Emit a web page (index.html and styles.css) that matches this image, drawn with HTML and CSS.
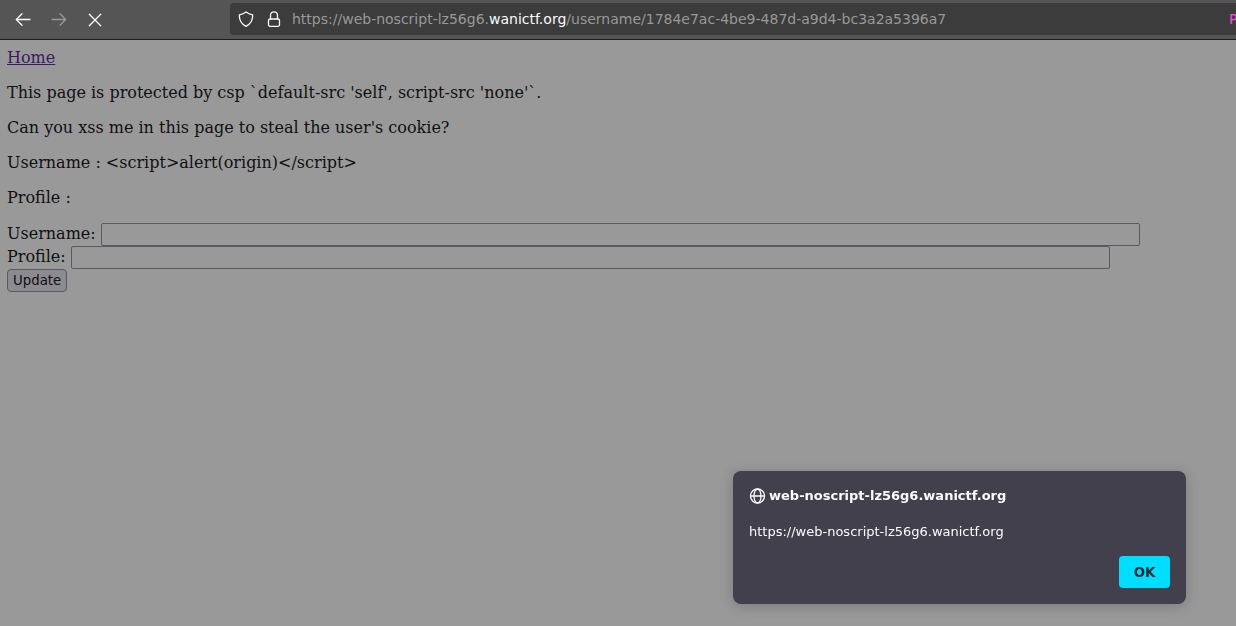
FILE: index.html
```html
<!DOCTYPE html>
<html lang="en">
<head>
<meta charset="utf-8">
<title>web-noscript</title>
<link rel="stylesheet" href="styles.css">
</head>
<body>
<header class="toolbar">
  <nav class="nav-buttons" aria-label="Navigation">
    <button class="nav-button" type="button" aria-label="Back">
      <svg class="icon" viewBox="0 0 16 16"><path d="M15 8.500H1.500M7 2.800L1.300 8.500L7 14.200"/></svg>
    </button>
    <button class="nav-button" type="button" aria-label="Forward" disabled>
      <svg class="icon" viewBox="0 0 16 16"><path d="M1 8.500H14.500M9 2.800L14.700 8.500L9 14.200"/></svg>
    </button>
    <button class="nav-button" type="button" aria-label="Stop">
      <svg class="icon" viewBox="0 0 16 16"><path d="M2.300 3.300L13.700 14.700M13.700 3.300L2.300 14.700"/></svg>
    </button>
  </nav>
  <div class="address-bar">
    <div class="site-icons">
      <svg class="icon" viewBox="0 0 16 16"><path d="M8 .9C9.800 2.300 12.200 3.300 14.600 3.800C15 8.800 13 12.800 8 15.300C3 12.800 1 8.800 1.400 3.800C3.800 3.300 6.200 2.300 8 .9Z"/></svg>
      <svg class="icon" viewBox="0 0 16 16"><rect x="2.500" y="8" width="11" height="7.300" rx="1.500"/><path d="M4.500 8V4.300a3.500 3.500 0 0 1 7 0V8"/></svg>
    </div>
    <div class="url">https://web-noscript-lz56g6.<span class="url-domain">wanictf.org</span>/username/1784e7ac-4be9-487d-a9d4-bc3a2a5396a7</div>
    <span class="container-label">P</span>
  </div>
</header>
<main class="page">
  <a class="home" href="#">Home</a>
  <p>This page is protected by csp `default-src 'self', script-src 'none'`.</p>
  <p>Can you xss me in this page to steal the user's cookie?</p>
  <p>Username : &lt;script&gt;alert(origin)&lt;/script&gt;</p>
  <p>Profile :</p>
  <form class="profile-form">
    <div class="field"><label for="username">Username:</label><input id="username" type="text"></div>
    <div class="field"><label for="profile">Profile:</label><input id="profile" type="text"></div>
    <button class="update" type="button">Update</button>
  </form>
</main>
<section class="dialog" role="alertdialog" aria-labelledby="dialog-title" aria-describedby="dialog-text">
  <h1 class="dialog-title" id="dialog-title">
    <svg class="icon" viewBox="0 0 16 16"><circle cx="8.500" cy="8" r="7"/><ellipse cx="8.500" cy="8" rx="3.500" ry="7"/><path d="M1.500 8H15.500"/></svg>
    web-noscript-lz56g6.wanictf.org
  </h1>
  <p class="dialog-text" id="dialog-text">https://web-noscript-lz56g6.wanictf.org</p>
  <button class="ok" type="button">OK</button>
</section>
</body>
</html>
```

FILE: styles.css
```css
* { box-sizing: border-box; }

body {
  margin: 0;
  min-height: 100vh;
  background: #99999a;
  color: #101011;
  font: 16px/19px "DejaVu Serif", serif;
}

.icon {
  display: block;
  flex: none;
  width: 16px;
  height: 16px;
  fill: none;
  stroke: currentColor;
  stroke-width: 1.3;
  stroke-linecap: round;
  stroke-linejoin: round;
}

.toolbar {
  display: flex;
  gap: 117px;
  padding: 3px 0 4px 5px;
  overflow: hidden;
  border-bottom: 1px solid #1c1c1c;
  background: #555;
  color: #fbfbfe;
  font: 14px/18px "DejaVu Sans", sans-serif;
}

.nav-buttons { display: flex; }

.nav-button {
  display: grid;
  place-items: center;
  width: 36px;
  padding: 0;
  border: 0;
  background: none;
  color: inherit;
}

.nav-button:disabled { color: #999; }

.address-bar {
  display: flex;
  flex: 1;
  align-items: center;
  gap: 10px;
  min-width: 0;
  height: 32px;
  padding-left: 8px;
  border-radius: 4px 0 0 4px;
  background: #3c3c3c;
}

.site-icons {
  display: flex;
  gap: 12px;
}

.url {
  flex: 1;
  overflow: hidden;
  color: #999;
  white-space: nowrap;
}

.url-domain { color: #fbfbfe; }

.container-label {
  width: 7px;
  color: #ff4bda;
}

.page { padding: 8px 7px; }

.page p { margin: 16px 0; }

.home { color: #3c1a63; }

.field {
  display: flex;
  align-items: flex-start;
  gap: 5px;
  line-height: 21px;
}

.field input {
  flex: 0 1 1039px;
  min-width: 0;
  height: 23px;
  padding: 1px 2px;
  border: 1px solid #5a5963;
  border-radius: 2px;
  background: transparent;
  font-family: "DejaVu Sans", sans-serif;
}

.update {
  display: block;
  height: 23px;
  padding: 0 5px;
  border: 1px solid #5a5963;
  border-radius: 4px;
  background: #8c8b90;
  color: #101011;
  font-family: "DejaVu Sans", sans-serif;
}

.dialog {
  position: fixed;
  right: 50px;
  bottom: 22px;
  display: flex;
  flex-direction: column;
  width: 453px;
  padding: 16px;
  border-radius: 8px;
  background: #42404c;
  box-shadow: 0 2px 14px rgba(0, 0, 0, .2);
  color: #fbfbfe;
  font: 13px/18px "DejaVu Sans", sans-serif;
}

.dialog-title {
  display: flex;
  align-items: center;
  gap: 4px;
  margin: 0 0 18px;
  font-size: inherit;
}

.dialog-text { margin: 0 0 15px; }

.ok {
  align-self: flex-end;
  width: 51px;
  height: 32px;
  padding: 0;
  border: 0;
  border-radius: 4px;
  background: #00ddff;
  color: #2b2a33;
  font-family: "DejaVu Sans", sans-serif;
  font-weight: bold;
}
```
